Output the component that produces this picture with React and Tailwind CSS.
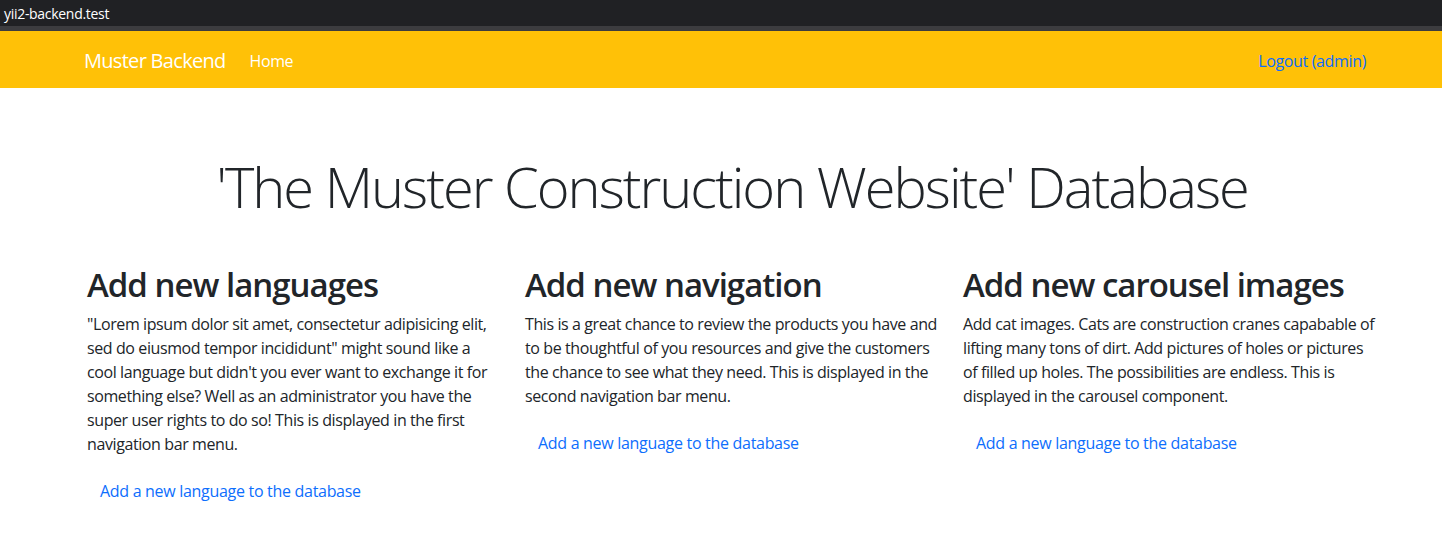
import React from "react";

const cards = [
  {
    title: "Add new languages",
    lines: [
      "\"Lorem ipsum dolor sit amet, consectetur adipisicing elit,",
      "sed do eiusmod tempor incididunt\" might sound like a",
      "cool language but didn't you ever want to exchange it for",
      "something else? Well as an administrator you have the",
      "super user rights to do so! This is displayed in the first",
      "navigation bar menu.",
    ],
  },
  {
    title: "Add new navigation",
    lines: [
      "This is a great chance to review the products you have and",
      "to be thoughtful of you resources and give the customers",
      "the chance to see what they need. This is displayed in the",
      "second navigation bar menu.",
    ],
  },
  {
    title: "Add new carousel images",
    lines: [
      "Add cat images. Cats are construction cranes capabable of",
      "lifting many tons of dirt. Add pictures of holes or pictures",
      "of filled up holes. The possibilities are endless. This is",
      "displayed in the carousel component.",
    ],
  },
];

export default function App() {
  return (
    <div className="min-h-screen bg-white text-[#212529] font-['Open_Sans',sans-serif]">
      {/* browser tab strip */}
      <div className="h-[26px] bg-[#202124] flex items-center pl-[4px]">
        <span className="text-white text-[14px] tracking-[-0.3px]">yii2-backend.test</span>
      </div>
      <div className="h-[5px] bg-[#3c3c3f]"></div>

      <nav className="h-[57px] bg-[#ffc107]">
        <div className="w-[1314px] ml-[72px] h-full flex items-center px-[12px] pt-[2px]">
          <a className="text-white text-[20px] tracking-[-0.7px]">Muster Backend</a>
          <a className="text-white text-[16px] ml-[24px] tracking-[-0.4px]">Home</a>
          <button className="ml-auto mr-[8px] text-[#0d6efd] text-[16px] tracking-[-0.35px]">Logout (admin)</button>
        </div>
      </nav>

      <div className="w-[1314px] ml-[75px]">
        <div className="text-center pt-[65px] pb-[43px]">
          <h1 className="text-[56px] font-light leading-[1.2] tracking-[-2px]">
            'The Muster Construction Website' Database
          </h1>
        </div>

        <div className="grid grid-cols-3">
          {cards.map((c) => (
            <div key={c.title} className="px-[12px]">
              <h2 className="text-[33px] font-semibold leading-[1.2] mb-[7px] tracking-[-1px] pt-[2px]">{c.title}</h2>
              <p className="text-[16px] leading-[24px] mb-[17px] tracking-[-0.4px]">
                {c.lines.map((l, i) => (
                  <React.Fragment key={i}>
                    {l}
                    {i < c.lines.length - 1 && <br />}
                  </React.Fragment>
                ))}
              </p>
              <a className="inline-block px-[13px] py-[6px] text-[16px] leading-[24px] text-[#0d6efd] tracking-[-0.3px]">
                Add a new language to the database
              </a>
            </div>
          ))}
        </div>
      </div>
    </div>
  );
}
